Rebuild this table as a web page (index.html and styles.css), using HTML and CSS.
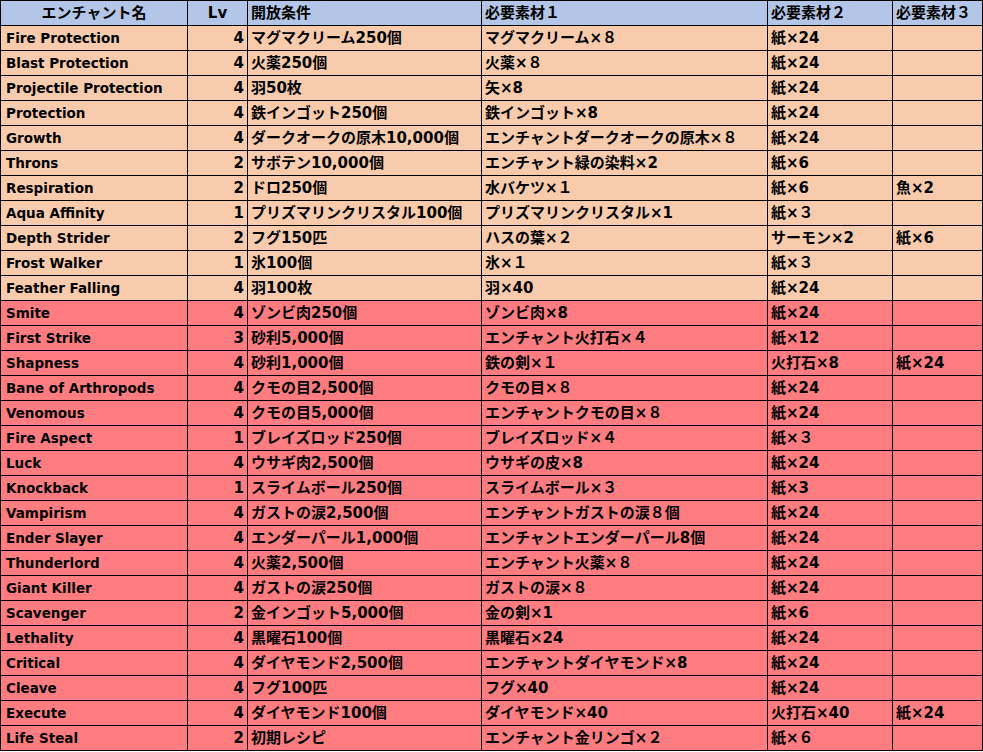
FILE: index.html
```html
<!DOCTYPE html>
<html lang="ja">
<head>
<meta charset="utf-8">
<title>エンチャント一覧</title>
<link rel="stylesheet" href="styles.css">
</head>
<body>
<table class="ench">
<colgroup>
<col class="c-name"><col class="c-lv"><col class="c-cond"><col class="c-m1"><col class="c-m2"><col class="c-m3">
</colgroup>
<thead>
<tr class="head"><th class="center">エンチャント名</th><th class="center">Lv</th><th>開放条件</th><th>必要素材１</th><th>必要素材２</th><th>必要素材３</th></tr>
</thead>
<tbody>
<tr class="peach"><td class="name">Fire Protection</td><td class="lv">4</td><td>マグマクリーム250個</td><td>マグマクリーム×８</td><td>紙×24</td><td></td></tr>
<tr class="peach"><td class="name">Blast Protection</td><td class="lv">4</td><td>火薬250個</td><td>火薬×８</td><td>紙×24</td><td></td></tr>
<tr class="peach"><td class="name">Projectile Protection</td><td class="lv">4</td><td>羽50枚</td><td>矢×8</td><td>紙×24</td><td></td></tr>
<tr class="peach"><td class="name">Protection</td><td class="lv">4</td><td>鉄インゴット250個</td><td>鉄インゴット×8</td><td>紙×24</td><td></td></tr>
<tr class="peach"><td class="name">Growth</td><td class="lv">4</td><td>ダークオークの原木10,000個</td><td>エンチャントダークオークの原木×８</td><td>紙×24</td><td></td></tr>
<tr class="peach"><td class="name">Throns</td><td class="lv">2</td><td>サボテン10,000個</td><td>エンチャント緑の染料×2</td><td>紙×6</td><td></td></tr>
<tr class="peach"><td class="name">Respiration</td><td class="lv">2</td><td>ドロ250個</td><td>水バケツ×１</td><td>紙×6</td><td>魚×2</td></tr>
<tr class="peach"><td class="name">Aqua Affinity</td><td class="lv">1</td><td>プリズマリンクリスタル100個</td><td>プリズマリンクリスタル×1</td><td>紙×３</td><td></td></tr>
<tr class="peach"><td class="name">Depth Strider</td><td class="lv">2</td><td>フグ150匹</td><td>ハスの葉×２</td><td>サーモン×2</td><td>紙×6</td></tr>
<tr class="peach"><td class="name">Frost Walker</td><td class="lv">1</td><td>氷100個</td><td>氷×１</td><td>紙×３</td><td></td></tr>
<tr class="peach"><td class="name">Feather Falling</td><td class="lv">4</td><td>羽100枚</td><td>羽×40</td><td>紙×24</td><td></td></tr>
<tr class="red"><td class="name">Smite</td><td class="lv">4</td><td>ゾンビ肉250個</td><td>ゾンビ肉×8</td><td>紙×24</td><td></td></tr>
<tr class="red"><td class="name">First Strike</td><td class="lv">3</td><td>砂利5,000個</td><td>エンチャント火打石×４</td><td>紙×12</td><td></td></tr>
<tr class="red"><td class="name">Shapness</td><td class="lv">4</td><td>砂利1,000個</td><td>鉄の剣×１</td><td>火打石×8</td><td>紙×24</td></tr>
<tr class="red"><td class="name">Bane of Arthropods</td><td class="lv">4</td><td>クモの目2,500個</td><td>クモの目×８</td><td>紙×24</td><td></td></tr>
<tr class="red"><td class="name">Venomous</td><td class="lv">4</td><td>クモの目5,000個</td><td>エンチャントクモの目×８</td><td>紙×24</td><td></td></tr>
<tr class="red"><td class="name">Fire Aspect</td><td class="lv">1</td><td>ブレイズロッド250個</td><td>ブレイズロッド×４</td><td>紙×３</td><td></td></tr>
<tr class="red"><td class="name">Luck</td><td class="lv">4</td><td>ウサギ肉2,500個</td><td>ウサギの皮×8</td><td>紙×24</td><td></td></tr>
<tr class="red"><td class="name">Knockback</td><td class="lv">1</td><td>スライムボール250個</td><td>スライムボール×３</td><td>紙×3</td><td></td></tr>
<tr class="red"><td class="name">Vampirism</td><td class="lv">4</td><td>ガストの涙2,500個</td><td>エンチャントガストの涙８個</td><td>紙×24</td><td></td></tr>
<tr class="red"><td class="name">Ender Slayer</td><td class="lv">4</td><td>エンダーパール1,000個</td><td>エンチャントエンダーパール8個</td><td>紙×24</td><td></td></tr>
<tr class="red"><td class="name">Thunderlord</td><td class="lv">4</td><td>火薬2,500個</td><td>エンチャント火薬×８</td><td>紙×24</td><td></td></tr>
<tr class="red"><td class="name">Giant Killer</td><td class="lv">4</td><td>ガストの涙250個</td><td>ガストの涙×８</td><td>紙×24</td><td></td></tr>
<tr class="red"><td class="name">Scavenger</td><td class="lv">2</td><td>金インゴット5,000個</td><td>金の剣×1</td><td>紙×6</td><td></td></tr>
<tr class="red"><td class="name">Lethality</td><td class="lv">4</td><td>黒曜石100個</td><td>黒曜石×24</td><td>紙×24</td><td></td></tr>
<tr class="red"><td class="name">Critical</td><td class="lv">4</td><td>ダイヤモンド2,500個</td><td>エンチャントダイヤモンド×8</td><td>紙×24</td><td></td></tr>
<tr class="red"><td class="name">Cleave</td><td class="lv">4</td><td>フグ100匹</td><td>フグ×40</td><td>紙×24</td><td></td></tr>
<tr class="red"><td class="name">Execute</td><td class="lv">4</td><td>ダイヤモンド100個</td><td>ダイヤモンド×40</td><td>火打石×40</td><td>紙×24</td></tr>
<tr class="red"><td class="name">Life Steal</td><td class="lv">2</td><td>初期レシピ</td><td>エンチャント金リンゴ×２</td><td>紙×６</td><td></td></tr>
</tbody>
</table>
</body>
</html>
```

FILE: styles.css
```css
html, body {
  margin: 0;
  padding: 0;
  background: #ffffff;
}

.ench {
  border-collapse: collapse;
  table-layout: fixed;
  width: 982px;
  font-family: "DejaVu Sans", "Noto Sans CJK JP", sans-serif;
  font-weight: bold;
  font-size: 15px;
  color: #000000;
}

.c-name { width: 187px; }
.c-lv { width: 60px; }
.c-cond { width: 234px; }
.c-m1 { width: 286px; }
.c-m2 { width: 125px; }
.c-m3 { width: 90px; }

.ench th,
.ench td {
  border: 1px solid #000000;
  height: 24px;
  padding: 0 3px;
  line-height: 24px;
  text-align: left;
  white-space: nowrap;
  overflow: hidden;
  box-sizing: border-box;
}

.head th {
  background: #b4c6e7;
  font-weight: bold;
}

.ench th.center { text-align: center; }

.peach td { background: #f8cbad; }
.red td { background: #ff7c80; }

.ench td.name {
  font-size: 13.5px;
  padding-left: 5px;
}

.ench td.lv {
  font-size: 15px;
  text-align: right;
}
```
